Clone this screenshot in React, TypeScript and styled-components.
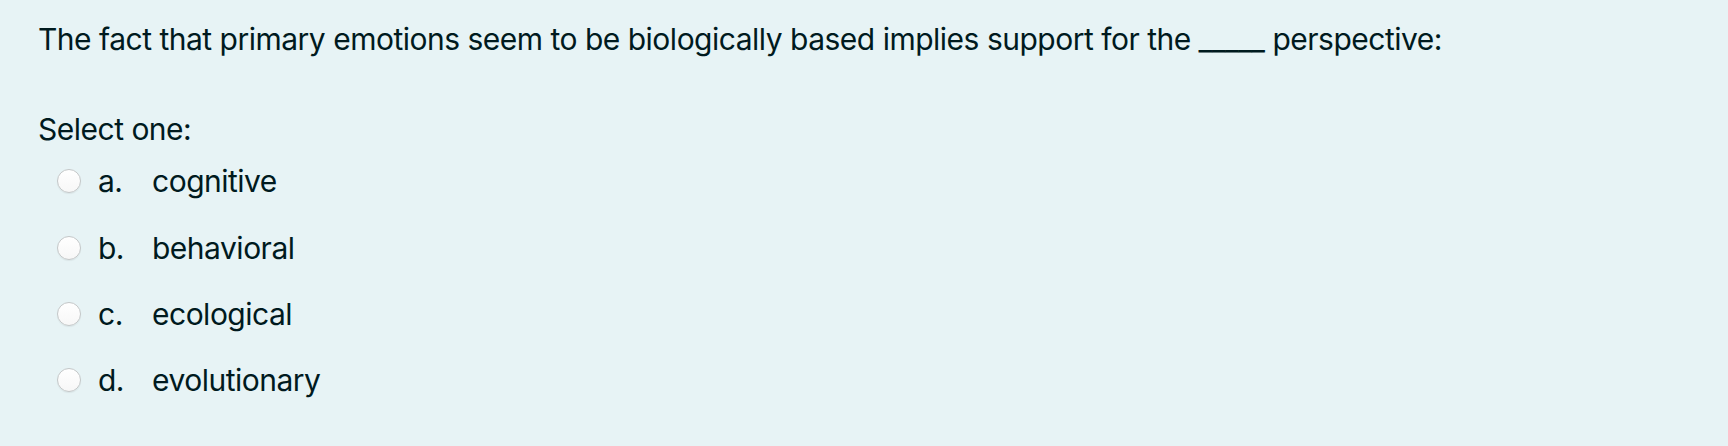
import styled, { createGlobalStyle } from "styled-components";

const GlobalStyle = createGlobalStyle`
  html, body {
    margin: 0;
    padding: 0;
    background: #e7f3f5;
  }
  body {
    font-family: Inter, "Liberation Sans", sans-serif;
    color: #001a1e;
  }
`;

const options = [
  { letter: "a.", text: "cognitive" },
  { letter: "b.", text: "behavioral" },
  { letter: "c.", text: "ecological" },
  { letter: "d.", text: "evolutionary" },
];

const App = () => {
  return (
    <>
      <GlobalStyle />
      <Formulation>
        <QText>The fact that primary emotions seem to be biologically based implies support for the _____ perspective:</QText>
        <Prompt>Select one:</Prompt>
        <AnswerList>
          {options.map((o) => (
            <Option key={o.letter}>
              <Radio type='radio' name='answer' />
              <Letter>{o.letter}</Letter>
              <AnswerText>{o.text}</AnswerText>
            </Option>
          ))}
        </AnswerList>
      </Formulation>
    </>
  );
};

export default App;

const Formulation = styled.div`
  height: 446px;
  box-sizing: border-box;
  padding: 16px 38px 0;
  background: #e7f3f5;
  font-size: 30px;
  letter-spacing: -0.5px;
`;

const QText = styled.p`
  margin: 0;
  line-height: 46px;
`;

const Prompt = styled.div`
  margin-top: 44px;
  line-height: 46px;
`;

const AnswerList = styled.div`
  display: flex;
  flex-direction: column;
`;

const Option = styled.label`
  display: flex;
  align-items: center;
  height: 66.4px;
  padding-left: 19px;
  margin-top: -4px;
  & + & {
    margin-top: 0;
  }
`;

const Radio = styled.input`
  appearance: none;
  margin: 0;
  width: 24px;
  height: 24px;
  border-radius: 50%;
  border: 1px solid #c4c7c8;
  background: linear-gradient(#ffffff, #f7f7f7);
  box-shadow: 0 1px 1px rgba(0, 0, 0, 0.06);
  box-sizing: border-box;
  flex-shrink: 0;
`;

const Letter = styled.span`
  margin-left: 17px;
  width: 54px;
`;

const AnswerText = styled.span``;
